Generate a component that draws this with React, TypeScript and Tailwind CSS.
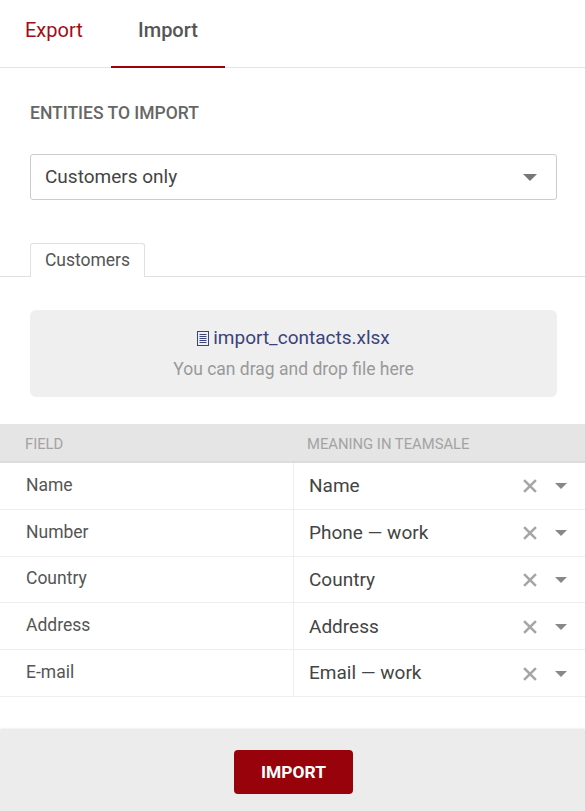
import React from "react";

const rows = [
  ["Name", "Name"],
  ["Number", "Phone — work"],
  ["Country", "Country"],
  ["Address", "Address"],
  ["E-mail", "Email — work"],
];

function Caret({ className, wide }: { className: string; wide?: boolean }) {
  return (
    <svg width={wide ? 14 : 12} height={wide ? 7 : 6} viewBox="0 0 12 6" className={className}>
      <path d="M0 0h12L6 6z" fill="currentColor" />
    </svg>
  );
}

export default function App() {
  return (
    <div className="w-[585px] h-[811px] bg-white flex flex-col overflow-hidden font-['Roboto',sans-serif]">
      <div className="h-[68px] shrink-0 border-b border-[#e4e4e4] flex items-start">
        <div className="w-[111px] h-[60px] pl-[25px] flex items-center text-[20px] text-[#a00d15]">Export</div>
        <div className="w-[114px] h-[68px] border-b-2 border-[#a00008] flex justify-center">
          <span className="h-[60px] flex items-center text-[20px] font-medium text-[#555555]">Import</span>
        </div>
      </div>

      <div className="px-[30px] pt-[35px] h-[86px] shrink-0 text-[17.5px] leading-5 font-medium text-[#666666]">
        ENTITIES TO IMPORT
      </div>

      <div className="ml-[30px] mr-[28px] h-[46px] shrink-0 border border-[#cccccc] rounded-[3px] pl-[14px] pr-[19px] flex items-center justify-between text-[19px] text-[#444444]">
        <span>Customers only</span>
        <Caret wide className="text-[#777777]" />
      </div>

      <div className="mt-[43px] h-[34px] shrink-0 border-b border-[#e0e0e0] pl-[30px] relative">
        <div className="w-[115px] h-[34px] pb-[1px] bg-white border border-b-0 border-[#e0e0e0] rounded-t-[3px] flex items-center justify-center text-[17.5px] text-[#555555]">
          Customers
        </div>
      </div>

      <div className="ml-[30px] mr-[28px] mt-[33px] h-[87px] shrink-0 bg-[#efefef] rounded-[6px] flex flex-col items-center pt-[15px]">
        <div className="h-[26px] flex items-center text-[19px] text-[#39447a]">
          <svg width="12" height="15" viewBox="0 0 12 15" className="mr-[4px]" fill="none" stroke="#39447a">
            <rect x="0.5" y="0.5" width="11" height="14" strokeWidth="1" />
            <path d="M2.5 3.5h7M2.5 5.5h7M2.5 7.5h7M2.5 9.5h7M2.5 11.5h7" strokeWidth="1" />
          </svg>
          import_contacts.xlsx
        </div>
        <div className="mt-[5px] h-[26px] flex items-center text-[17.5px] text-[#999999]">You can drag and drop file here</div>
      </div>

      <div className="mt-[27px] h-[39px] pt-[4px] shrink-0 bg-[#e5e5e5] border-b-2 border-[#dcdcdc] grid grid-cols-[293px_1fr] items-center text-[14.8px] text-[#a3a3a3]">
        <div className="pl-[25px]">FIELD</div>
        <div className="pl-[14px]">MEANING IN TEAMSALE</div>
      </div>

      {rows.map(([field, meaning]) => (
        <div key={field} className="h-[46.8px] shrink-0 border-b border-[#eeeeee] grid grid-cols-[293px_1fr] text-[#555555]">
          <div className="pl-[26px] flex items-center text-[17.5px] pb-[2px]">{field}</div>
          <div className="border-l border-[#eeeeee] pl-[15px] pr-[18px] pt-[1px] flex items-center text-[19px] text-[#444444]">
            <span className="flex-1">{meaning}</span>
            <svg width="14" height="14" viewBox="0 0 13 13" className="mr-[18px]" stroke="#a6a6a6" strokeWidth="2.4">
              <path d="M1 1l11 11M12 1L1 12" />
            </svg>
            <Caret className="text-[#888888]" />
          </div>
        </div>
      ))}

      <div className="mt-auto h-[81px] shrink-0 bg-[#ececec] shadow-[0_-1px_2px_rgba(0,0,0,0.12)] flex justify-center pt-[20px]">
        <div className="w-[119px] h-[44px] ml-[2px] bg-[#98030b] rounded-[4px] flex items-center justify-center text-white text-[17.4px] font-bold">
          IMPORT
        </div>
      </div>
    </div>
  );
}
